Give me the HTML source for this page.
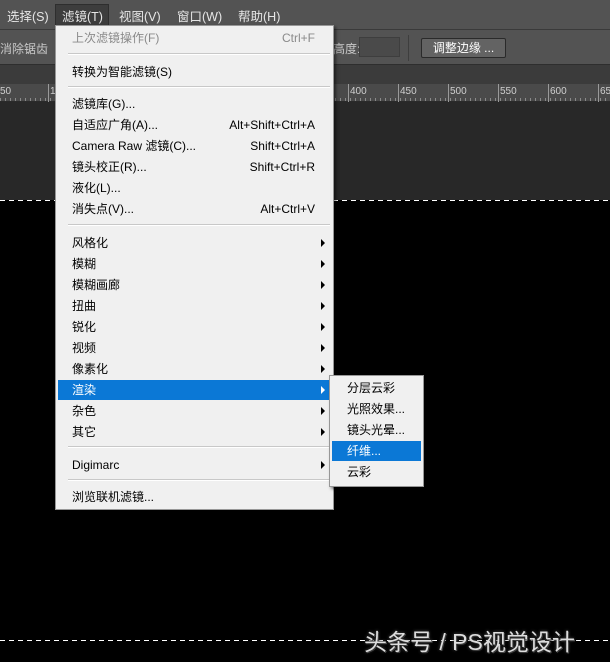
<!DOCTYPE html>
<html><head><meta charset="utf-8"><style>
*{margin:0;padding:0;box-sizing:border-box}
body{width:610px;height:662px;overflow:hidden;background:#000;font-family:"Liberation Sans","Microsoft YaHei","Noto Sans CJK SC",sans-serif;font-size:12px;position:relative}
.abs{position:absolute}
#menubar{left:0;top:0;width:610px;height:30px;background:#535353;border-bottom:1px solid #3a3a3a}
#menubar span{position:absolute;top:6px;color:#e6e6e6;font-size:12.5px}
#opts{left:0;top:30px;width:610px;height:35px;background:#535353;border-bottom:1px solid #2e2e2e}
#band{left:0;top:65px;width:610px;height:19px;background:#3b3b3b}
#ruler{left:0;top:84px;width:610px;height:18px;background:#4a4a4a;border-bottom:1px solid #2a2a2a;
background-image:repeating-linear-gradient(90deg,#8a8a8a 0 1px,transparent 1px 5px);background-size:100% 4px;background-repeat:no-repeat;background-position:0 14px}
#ruler .t{position:absolute;top:0;width:1px;height:18px;background:#9a9a9a}
#ruler .n{position:absolute;top:2px;font-size:10px;color:#cfcfcf}
#gray{left:0;top:102px;width:610px;height:98px;background:#282828}
.dash{left:0;width:610px;height:1px;background-image:repeating-linear-gradient(90deg,#fff 0 5px,transparent 5px 9px)}
#menu{left:55px;top:25px;width:279px;height:485px;background:#f0f0f0;border:1px solid #979797;box-shadow:2px 2px 3px rgba(0,0,0,.5)}
.it{position:absolute;left:2px;width:273px;height:20px;line-height:20px;padding-left:14px;color:#000;font-size:12px}
.it .k{position:absolute;right:16px;top:0}
.it .a{position:absolute;right:6px;top:6px;width:0;height:0;border-left:4px solid #000;border-top:4px solid transparent;border-bottom:4px solid transparent}
.hl{background:#0b78d6;color:#fff}
.hl .a{border-left-color:#fff}
.sep{position:absolute;left:12px;width:262px;height:2px;border-top:1px solid #c8c8c8;border-bottom:1px solid #fff}
#sub{left:329px;top:375px;width:95px;height:112px;background:#f0f0f0;border:1px solid #979797;box-shadow:2px 2px 3px rgba(0,0,0,.5)}
#sub .it{width:89px;padding-left:15px}
</style></head><body>
<div id="menubar" class="abs">
<span style="left:7px">选择(S)</span>
<div class="abs" style="left:55px;top:4px;width:54px;height:23px;background:#3d3d3d;border:1px solid #2e2e2e"></div>
<span style="left:62px">滤镜(T)</span>
<span style="left:119px">视图(V)</span>
<span style="left:177px">窗口(W)</span>
<span style="left:238px">帮助(H)</span>
</div>
<div id="opts" class="abs">
<span class="abs" style="left:0;top:10px;color:#c8c8c8;font-size:12px">消除锯齿</span>
<span class="abs" style="left:333px;top:10px;color:#c8c8c8">高度:</span>
<div class="abs" style="left:359px;top:7px;width:41px;height:20px;background:#4a4a4a;border:1px solid #3e3e3e"></div>
<div class="abs" style="left:408px;top:5px;width:1px;height:26px;background:#3e3e3e"></div>
<div class="abs" style="left:421px;top:8px;width:85px;height:20px;background:#636363;border:1px solid #2a2a2a;border-radius:2px;color:#fff;text-align:center;line-height:18px;font-size:12px">调整边缘 ...</div>
</div>
<div id="band" class="abs"></div>
<div id="ruler" class="abs">
<div class="t" style="left:-2px"></div><span class="n" style="left:0px">50</span>
<div class="t" style="left:48px"></div><span class="n" style="left:50px">100</span>
<div class="t" style="left:348px"></div><span class="n" style="left:350px">400</span>
<div class="t" style="left:398px"></div><span class="n" style="left:400px">450</span>
<div class="t" style="left:448px"></div><span class="n" style="left:450px">500</span>
<div class="t" style="left:498px"></div><span class="n" style="left:500px">550</span>
<div class="t" style="left:548px"></div><span class="n" style="left:550px">600</span>
<div class="t" style="left:598px"></div><span class="n" style="left:600px">650</span>
</div>
<div id="gray" class="abs"></div>
<div class="abs dash" style="top:200px"></div>
<div class="abs dash" style="top:640px"></div>
<div class="abs" style="left:364px;top:623px;color:#ddd;font-size:23px;text-shadow:1px 1px 2px #000,0 0 3px #666,1px 1px 0 #888">头条号 / PS视觉设计</div>

<div id="menu" class="abs">
<div class="it" style="top:2px;color:#8a8a8a">上次滤镜操作(F)<span class="k">Ctrl+F</span></div>
<div class="sep" style="top:27px"></div>
<div class="it" style="top:36px">转换为智能滤镜(S)</div>
<div class="sep" style="top:60px"></div>
<div class="it" style="top:68px">滤镜库(G)...</div>
<div class="it" style="top:89px">自适应广角(A)...<span class="k">Alt+Shift+Ctrl+A</span></div>
<div class="it" style="top:110px">Camera Raw 滤镜(C)...<span class="k">Shift+Ctrl+A</span></div>
<div class="it" style="top:131px">镜头校正(R)...<span class="k">Shift+Ctrl+R</span></div>
<div class="it" style="top:152px">液化(L)...</div>
<div class="it" style="top:173px">消失点(V)...<span class="k">Alt+Ctrl+V</span></div>
<div class="sep" style="top:198px"></div>
<div class="it" style="top:207px">风格化<i class="a"></i></div>
<div class="it" style="top:228px">模糊<i class="a"></i></div>
<div class="it" style="top:249px">模糊画廊<i class="a"></i></div>
<div class="it" style="top:270px">扭曲<i class="a"></i></div>
<div class="it" style="top:291px">锐化<i class="a"></i></div>
<div class="it" style="top:312px">视频<i class="a"></i></div>
<div class="it" style="top:333px">像素化<i class="a"></i></div>
<div class="it hl" style="top:354px">渲染<i class="a"></i></div>
<div class="it" style="top:375px">杂色<i class="a"></i></div>
<div class="it" style="top:396px">其它<i class="a"></i></div>
<div class="sep" style="top:420px"></div>
<div class="it" style="top:429px">Digimarc<i class="a"></i></div>
<div class="sep" style="top:453px"></div>
<div class="it" style="top:461px">浏览联机滤镜...</div>
</div>

<div id="sub" class="abs">
<div class="it" style="top:2px">分层云彩</div>
<div class="it" style="top:23px">光照效果...</div>
<div class="it" style="top:44px">镜头光晕...</div>
<div class="it hl" style="top:65px">纤维...</div>
<div class="it" style="top:86px">云彩</div>
</div>
</body></html>
